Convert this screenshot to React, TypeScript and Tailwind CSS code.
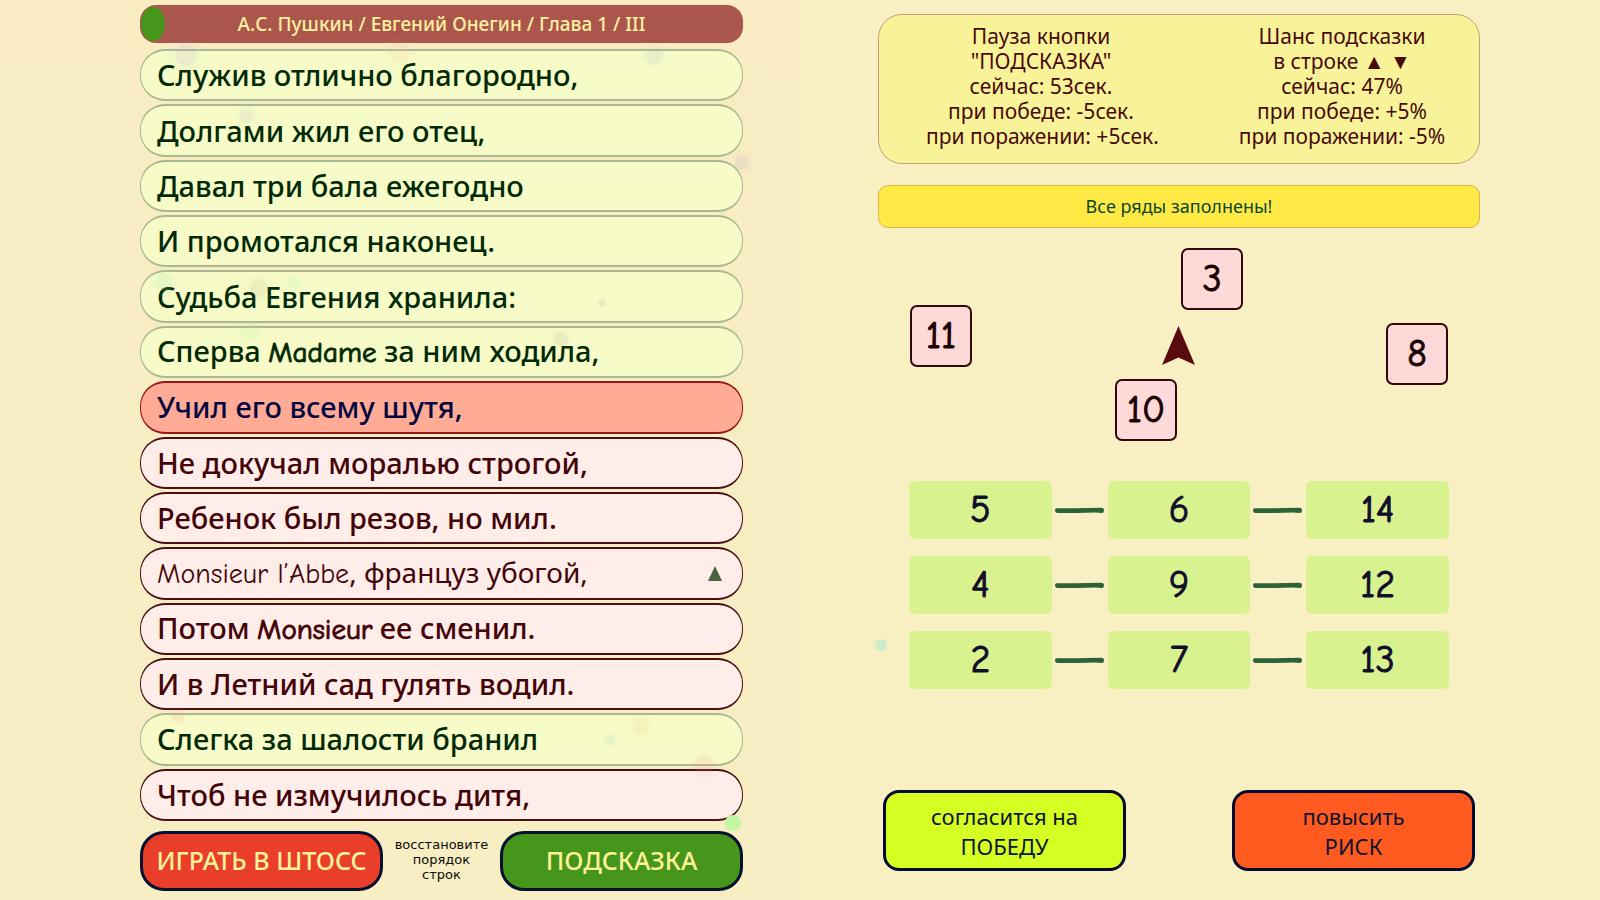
import React from "react";

type LineState = "placed" | "open" | "active";

interface PoemLine {
  text: string;
  state: LineState;
  hint?: boolean;
}

const lines: PoemLine[] = [
  { text: "Служив отлично благородно,", state: "placed" },
  { text: "Долгами жил его отец,", state: "placed" },
  { text: "Давал три бала ежегодно", state: "placed" },
  { text: "И промотался наконец.", state: "placed" },
  { text: "Судьба Евгения хранила:", state: "placed" },
  { text: "Сперва Madame за ним ходила,", state: "placed" },
  { text: "Учил его всему шутя,", state: "active" },
  { text: "Не докучал моралью строгой,", state: "open" },
  { text: "Ребенок был резов, но мил.", state: "open" },
  { text: "Monsieur l’Abbe, француз убогой,", state: "open", hint: true },
  { text: "Потом Monsieur ее сменил.", state: "open" },
  { text: "И в Летний сад гулять водил.", state: "open" },
  { text: "Слегка за шалости бранил", state: "placed" },
  { text: "Чтоб не измучилось дитя,", state: "open" },
];

const lineStyles: Record<LineState, string> = {
  placed: "border-[#a9b893] bg-[#f6fbc7] text-[#032a06]",
  open: "border-[#4a1014] bg-[#ffedea] text-[#440408]",
  active: "border-[#951717] bg-[#ffab96] text-[#05063f]",
};

const rows = [
  [5, 6, 14],
  [4, 9, 12],
  [2, 7, 13],
];

const cards = [
  { value: 3, place: "left-[303px] top-[20px]" },
  { value: 11, place: "left-[32px] top-[77px]" },
  { value: 8, place: "left-[508px] top-[95px]" },
  { value: 10, place: "left-[237px] top-[151px]" },
];

const bubbles = [
  { cx: 186, cy: 55, r: 11, fill: "#b8a8e0" },
  { cx: 246, cy: 116, r: 7, fill: "#b0b8c0" },
  { cx: 399, cy: 53, r: 10, fill: "#ffc0a0" },
  { cx: 654, cy: 56, r: 8, fill: "#b8a8c8" },
  { cx: 742, cy: 162, r: 7, fill: "#b090c0" },
  { cx: 164, cy: 282, r: 9, fill: "#a0f0c0" },
  { cx: 259, cy: 288, r: 9, fill: "#c8b0a0" },
  { cx: 294, cy: 283, r: 6, fill: "#a0f0d0" },
  { cx: 250, cy: 331, r: 9, fill: "#b8f090" },
  { cx: 561, cy: 339, r: 7, fill: "#a8a890" },
  { cx: 602, cy: 303, r: 3, fill: "#9090b0" },
  { cx: 641, cy: 727, r: 8, fill: "#ffc880" },
  { cx: 610, cy: 740, r: 5, fill: "#a0c8d8" },
  { cx: 704, cy: 764, r: 9, fill: "#ff9080" },
  { cx: 178, cy: 716, r: 6, fill: "#ff90a0" },
];

function LatinAware({ text, heavy }: { text: string; heavy: boolean }) {
  return (
    <span>
      {text.split(/([A-Za-z]+(?:[ ’]+[A-Za-z]+)*)/).map((part, i) =>
        i % 2 === 1 ? (
          <span
            key={i}
            className={`font-['Comic_Sans_MS','Comic_Neue','Noto_Sans',sans-serif] font-normal ${
              heavy ? "[-webkit-text-stroke:1px]" : ""
            }`}
          >
            {part}
          </span>
        ) : (
          part
        ),
      )}
    </span>
  );
}

function Connector() {
  return (
    <svg viewBox="0 0 56 8" className="h-2 w-14 shrink-0" aria-hidden="true">
      <path
        d="M4.5 2.3 H24 L49 1.7 Q52 1.5 52 4.3 Q52 7 50 6.9 L43 6.6 L25 7 H6 Q3 7.4 3 4.6 Q3 2.3 4.5 2.3Z"
        fill="#2b6238"
      />
    </svg>
  );
}

function PoemPanel() {
  return (
    <section className="flex flex-col bg-gradient-to-b from-[#f9ecc3] via-[#f7edc3] to-[#f7eec4] pt-[5px] pr-[57px] pb-[9px] pl-[140px]">
      <h1 className="relative flex h-[38px] items-center justify-center rounded-[16px] bg-[#ab564c] text-[19px] font-medium text-[#fdf0a0]">
        <span className="absolute top-0.5 bottom-0.5 left-px w-6 rounded-[50%] bg-[#45961b]" aria-hidden="true" />
        А.С. Пушкин / Евгений Онегин / Глава 1 / III
      </h1>
      <ol className="mt-1.5 grid flex-1 auto-rows-fr gap-[3px]">
        {lines.map((line) => (
          <li key={line.text} className="flex">
            <button
              type="button"
              className={`flex w-full items-center justify-between rounded-[25px] border-x border-y-2 px-4 text-left whitespace-nowrap ${
                line.hint ? "text-[28px]" : "text-[29px] font-medium"
              } leading-[40px] ${lineStyles[line.state]}`}
            >
              <LatinAware text={line.text} heavy={!line.hint} />
              {line.hint && (
                <svg viewBox="0 0 14 15" className="mr-1 h-[15px] w-[14px]" aria-hidden="true">
                  <path d="M7 0 14 15H0Z" fill="#49633f" />
                </svg>
              )}
            </button>
          </li>
        ))}
      </ol>
      <div className="mt-2.5 flex items-center justify-between">
        <button
          type="button"
          className="h-[60px] w-[243px] rounded-[24px] border-3 border-[#06122f] bg-[#e93e2a] text-[25px] font-medium whitespace-nowrap text-[#fbf29a]"
        >
          ИГРАТЬ В ШТОСС
        </button>
        <p className="pb-1 text-center font-['DejaVu_Sans',sans-serif] text-[13px] leading-[15px] whitespace-nowrap text-[#0c0c08]">
          восстановите
          <br />
          порядок
          <br />
          строк
        </p>
        <button
          type="button"
          className="h-[60px] w-[243px] rounded-[24px] border-3 border-[#06122f] bg-[#45961b] text-[25px] font-medium whitespace-nowrap text-[#fbf29a]"
        >
          ПОДСКАЗКА
        </button>
      </div>
    </section>
  );
}

function GamePanel() {
  return (
    <section className="flex flex-col bg-[#f8efc2] pt-[14px] pr-[120px] pb-[29px] pl-[78px]">
      <div className="flex h-[150px] justify-between rounded-[24px] border border-[#bda56c] bg-[#f8f399] pt-[9px] pr-[33px] pl-[47px] text-center text-[21px] leading-[25px] whitespace-nowrap text-[#470b0c]">
        <p className="w-[230px]">
          Пауза кнопки
          <br />
          "ПОДСКАЗКА"
          <br />
          сейчас: 53сек.
          <br />
          при победе: -5сек.
          <br />
          при поражении: +5сек.
        </p>
        <p className="w-[208px]">
          Шанс подсказки
          <br />
          в строке ▲ ▼
          <br />
          сейчас: 47%
          <br />
          при победе: +5%
          <br />
          при поражении: -5%
        </p>
      </div>
      <p
        role="status"
        className="mt-[21px] flex h-[43px] items-center justify-center rounded-[10px] border border-[#d9b552] bg-[#ffea45] text-[18px] text-[#0c4626]"
      >
        Все ряды заполнены!
      </p>

      <div className="relative h-[253px] font-['Comic_Sans_MS','Comic_Neue','Noto_Sans',sans-serif]">
        {cards.map((card) => (
          <button
            key={card.value}
            type="button"
            className={`absolute size-[62px] rounded-[7px] border-2 border-[#30090f] bg-[#ffd9d8] text-[38px] leading-none text-[#1a0304] [-webkit-text-stroke:1px] ${card.place}`}
          >
            {card.value}
          </button>
        ))}
        <svg
          viewBox="0 0 33 39"
          className="absolute top-[98px] left-[284px] h-[39px] w-[33px]"
          aria-hidden="true"
        >
          <path d="M16.5 0 33 39 16.5 31.5 0 39Z" fill="#590c0f" />
        </svg>
      </div>

      <div className="flex flex-col gap-[17px] px-[31px] font-['Comic_Sans_MS','Comic_Neue','Noto_Sans',sans-serif]">
        {rows.map((row) => (
          <div key={row.join("-")} className="flex items-center">
            {row.map((value, i) => (
              <React.Fragment key={value}>
                {i > 0 && <Connector />}
                <span className="flex h-[58px] flex-1 items-center justify-center rounded-[6px] bg-[#d9f290] text-[38px] leading-none text-[#100f2b] [-webkit-text-stroke:1px]">
                  {value}
                </span>
              </React.Fragment>
            ))}
          </div>
        ))}
      </div>

      <div className="mt-auto flex justify-between px-[5px]">
        <button
          type="button"
          className="h-[81px] w-[243px] rounded-[16px] border-3 border-[#060b30] bg-[#d5ff22] text-[22px] leading-[30px] text-[#0c1430]"
        >
          согласится на
          <br />
          ПОБЕДУ
        </button>
        <button
          type="button"
          className="h-[81px] w-[243px] rounded-[16px] border-3 border-[#060b30] bg-[#ff5a1f] text-[22px] leading-[30px] text-[#0c1430]"
        >
          повысить
          <br />
          РИСК
        </button>
      </div>
    </section>
  );
}

export default function App() {
  return (
    <main className="relative grid min-h-screen grid-cols-2 bg-[#f8efc2] font-['Noto_Sans',sans-serif]">
      <PoemPanel />
      <GamePanel />
      <svg className="pointer-events-none absolute inset-0 h-full w-full" aria-hidden="true">
        {bubbles.map((b) => (
          <g key={`${b.cx}-${b.cy}`} fill={b.fill}>
            <circle cx={b.cx} cy={b.cy} r={b.r} opacity="0.12" />
            <circle cx={b.cx} cy={b.cy} r={b.r * 1.6} opacity="0.04" />
          </g>
        ))}
        <circle cx="733" cy="823" r="8" fill="#c5f7a2" />
        <circle cx="881" cy="645" r="6" fill="#cdeccb" />
      </svg>
    </main>
  );
}
